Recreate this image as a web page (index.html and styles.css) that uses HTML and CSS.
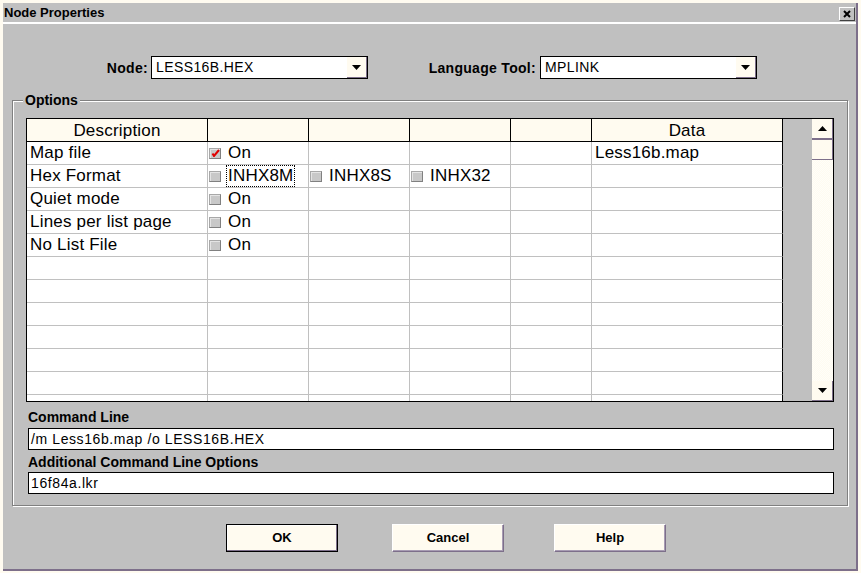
FILE: index.html
```html
<!DOCTYPE html>
<html>
<head>
<meta charset="utf-8">
<link rel="stylesheet" href="styles.css">
</head>
<body>
<div class="dialog">
  <div class="titlebar">
    <span class="title">Node Properties</span>
    <span class="close"><svg width="8" height="8" viewBox="0 0 8 8"><path d="M1 1 L7 7 M7 1 L1 7" stroke="#000" stroke-width="2"/></svg></span>
  </div>
  <div class="content">
    <div class="top-row">
      <span class="lbl node-lbl">Node:</span>
      <div class="combo"><span class="combo-text">LESS16B.HEX</span><span class="drop"><svg width="9" height="5" viewBox="0 0 9 5"><path d="M0 0 H9 L4.5 5 Z" fill="#000"/></svg></span></div>
      <span class="lbl lang-lbl">Language Tool:</span>
      <div class="combo"><span class="combo-text">MPLINK</span><span class="drop"><svg width="9" height="5" viewBox="0 0 9 5"><path d="M0 0 H9 L4.5 5 Z" fill="#000"/></svg></span></div>
    </div>

    <div class="groupbox">
      <span class="legend">Options</span>
      <div class="gridbox">
        <div class="table">
          <div class="hd">Description</div><div class="hd"></div><div class="hd"></div><div class="hd"></div><div class="hd"></div><div class="hd last">Data</div>

          <div class="c">Map file</div>
          <div class="c"><span class="cb"><svg width="9" height="8" viewBox="0 0 9 8"><path d="M1.5 4.5 L3 7 L8 1" stroke="#e00000" stroke-width="2" fill="none"/></svg></span><span class="opt">On</span></div>
          <div class="c"></div><div class="c"></div><div class="c"></div>
          <div class="c last data">Less16b.map</div>

          <div class="c">Hex Format</div>
          <div class="c"><span class="cb"></span><span class="opt focus">INHX8M</span></div>
          <div class="c"><span class="cb"></span><span class="opt">INHX8S</span></div>
          <div class="c"><span class="cb"></span><span class="opt">INHX32</span></div>
          <div class="c"></div><div class="c last"></div>

          <div class="c">Quiet mode</div>
          <div class="c"><span class="cb"></span><span class="opt">On</span></div>
          <div class="c"></div><div class="c"></div><div class="c"></div><div class="c last"></div>

          <div class="c">Lines per list page</div>
          <div class="c"><span class="cb"></span><span class="opt">On</span></div>
          <div class="c"></div><div class="c"></div><div class="c"></div><div class="c last"></div>

          <div class="c">No List File</div>
          <div class="c"><span class="cb"></span><span class="opt">On</span></div>
          <div class="c"></div><div class="c"></div><div class="c"></div><div class="c last"></div>

          <div class="c"></div><div class="c"></div><div class="c"></div><div class="c"></div><div class="c"></div><div class="c last"></div>
          <div class="c"></div><div class="c"></div><div class="c"></div><div class="c"></div><div class="c"></div><div class="c last"></div>
          <div class="c"></div><div class="c"></div><div class="c"></div><div class="c"></div><div class="c"></div><div class="c last"></div>
          <div class="c"></div><div class="c"></div><div class="c"></div><div class="c"></div><div class="c"></div><div class="c last"></div>
          <div class="c"></div><div class="c"></div><div class="c"></div><div class="c"></div><div class="c"></div><div class="c last"></div>
          <div class="c"></div><div class="c"></div><div class="c"></div><div class="c"></div><div class="c"></div><div class="c last"></div>
          <div class="c"></div><div class="c"></div><div class="c"></div><div class="c"></div><div class="c"></div><div class="c last"></div>
        </div>
        <div class="gap"></div>
        <div class="scrollbar">
          <div class="sb-btn"><svg width="9" height="5" viewBox="0 0 9 5"><path d="M0 5 H9 L4.5 0 Z" fill="#000"/></svg></div>
          <div class="sb-thumb"></div>
          <div class="sb-track"></div>
          <div class="sb-btn"><svg width="9" height="5" viewBox="0 0 9 5"><path d="M0 0 H9 L4.5 5 Z" fill="#000"/></svg></div>
        </div>
      </div>
      <div class="field-lbl first">Command Line</div>
      <div class="textbox">/m Less16b.map /o LESS16B.HEX</div>
      <div class="field-lbl">Additional Command Line Options</div>
      <div class="textbox second">16f84a.lkr</div>
    </div>

    <div class="buttons">
      <div class="btn default"><span>OK</span></div>
      <div class="btn cancel"><span>Cancel</span></div>
      <div class="btn help"><span>Help</span></div>
    </div>
  </div>
</div>
</body>
</html>
```
FILE: styles.css
```css
html, body {
  margin: 0;
  padding: 0;
}
body {
  background: #fffbf0;
  padding: 3px 0 0 3px;
  font-family: "Liberation Sans", Arial, sans-serif;
  color: #000;
}
.dialog {
  width: 855px;
  height: 568px;
  box-sizing: border-box;
  background: #c0c0c0;
  border-right: 2px solid #7d6f8a;
  border-bottom: 2px solid #7d6f8a;
  display: flex;
  flex-direction: column;
}
.titlebar {
  height: 21px;
  box-sizing: border-box;
  border-bottom: 2px solid #fff;
  display: flex;
  align-items: flex-start;
  justify-content: space-between;
  padding-left: 1px;
}
.title {
  font-weight: bold;
  font-size: 13px;
  line-height: 20px;
}
.close {
  width: 16px;
  height: 14px;
  box-sizing: border-box;
  margin-top: 4px;
  margin-right: 1px;
  border: 1px solid;
  border-color: #fff #404040 #404040 #fff;
  background: #c0c0c0;
  display: flex;
  align-items: center;
  justify-content: center;
}
.close svg { display: block; }
.content {
  flex: 1;
  display: flex;
  flex-direction: column;
}
.top-row {
  margin-top: 32px;
  display: flex;
  align-items: center;
  height: 23px;
}
.lbl {
  font-weight: bold;
  font-size: 14px;
  letter-spacing: 0.3px;
  text-align: right;
  box-sizing: border-box;
}
.node-lbl {
  width: 145px;
  padding-right: 0;
}
.lang-lbl {
  width: 172px;
  padding-right: 4px;
}
.combo {
  margin-left: 3px;
  width: 217px;
  height: 23px;
  box-sizing: border-box;
  border: 1px solid #000;
  background: #fff;
  display: flex;
  align-items: stretch;
}
.lang-lbl + .combo { margin-left: 0; }
.combo-text {
  flex: 1;
  font-size: 14px;
  letter-spacing: 0.4px;
  line-height: 21px;
  padding-left: 4px;
}
.drop {
  width: 20px;
  box-sizing: border-box;
  background: #fffbf0;
  border-right: 1px solid #7d6f8a;
  border-bottom: 1px solid #7d6f8a;
  display: flex;
  align-items: center;
  justify-content: center;
  padding-top: 1px;
}
.drop svg { display: block; }

.groupbox {
  position: relative;
  margin-top: 21px;
  margin-left: 9px;
  width: 836px;
  height: 406px;
  box-sizing: border-box;
  border: 1px solid #808080;
  box-shadow: inset 1px 1px 0 #fff, 1px 1px 0 #fff;
  padding: 17px 0 0 13px;
}
.legend {
  position: absolute;
  top: -9px;
  left: 10px;
  padding: 0 2px;
  background: #c0c0c0;
  font-weight: bold;
  font-size: 14px;
  line-height: 16px;
}
.gridbox {
  width: 808px;
  height: 284px;
  box-sizing: border-box;
  border: 1px solid #000;
  display: flex;
  background: #c0c0c0;
}
.table {
  width: 756px;
  height: 282px;
  overflow: hidden;
  display: grid;
  grid-template-columns: 181px 101px 101px 101px 81px 191px;
  grid-auto-rows: 23px;
  background: #fff;
  font-size: 17px;
  letter-spacing: 0.2px;
}
.hd {
  background: #fffbf0;
  border-right: 1px solid #000;
  border-bottom: 1px solid #000;
  text-align: center;
  line-height: 23px;
}
.c {
  border-right: 1px solid #c0c0c0;
  border-bottom: 1px solid #c0c0c0;
  line-height: 22px;
  padding-left: 3px;
  display: flex;
  align-items: center;
  white-space: nowrap;
}
.c.last { border-right-color: #000; }
.c:has(.cb) { padding-left: 0; }
.cb {
  width: 12px;
  height: 11px;
  box-sizing: border-box;
  background: #c8c8c8;
  border: 1px solid;
  border-color: #a8a8a8 #808080 #808080 #a8a8a8;
  box-shadow: inset 1px 1px 0 #e4e4e4;
  margin-left: 1px;
  margin-right: 7px;
  display: flex;
  align-items: center;
  justify-content: center;
  flex: none;
}
.cb svg { display: block; }
.opt {
  line-height: 20px;
  padding: 0 1px;
  border: 1px solid transparent;
  margin-left: -2px;
}
.opt.focus {
  border: 1px dotted #000;
}
.gap {
  width: 29px;
}
.scrollbar {
  width: 21px;
  display: flex;
  flex-direction: column;
}
.sb-btn {
  height: 20px;
  box-sizing: border-box;
  background: #fffbf0;
  border-right: 1px solid #7d6f8a;
  border-bottom: 1px solid #7d6f8a;
  display: flex;
  align-items: center;
  justify-content: center;
}
.sb-btn svg { display: block; }
.sb-thumb {
  height: 21px;
  box-sizing: border-box;
  background: #fffbf0;
  border-top: 1px solid #7d6f8a;
  border-right: 1px solid #7d6f8a;
  border-bottom: 1px solid #7d6f8a;
}
.sb-track {
  flex: 1;
  background: repeating-conic-gradient(#fffbf0 0 25%, #fffef9 0 50%) 0 0 / 2px 2px;
}
.field-lbl {
  margin-left: 2px;
  margin-top: 7px;
  font-weight: bold;
  font-size: 14px;
  line-height: 16px;
}
.field-lbl + .textbox { margin-top: 3px; }
.textbox + .field-lbl { margin-top: 4px; }
.textbox.second { margin-top: 2px; }
.textbox {
  margin-left: 2px;
  width: 806px;
  height: 22px;
  box-sizing: border-box;
  border: 1px solid #000;
  background: #fff;
  font-size: 14px;
  letter-spacing: 0.6px;
  line-height: 20px;
  padding-left: 2px;
}
.buttons {
  margin-top: 18px;
  display: flex;
  padding-left: 223px;
}
.btn {
  width: 112px;
  height: 28px;
  box-sizing: border-box;
  background: #fffbf0;
  border: 1px solid;
  border-color: #fff #7d6f8a #7d6f8a #fff;
  box-shadow: inset -1px -1px 0 #a89cb3;
  display: flex;
  align-items: center;
  justify-content: center;
  font-weight: bold;
  font-size: 13px;
  padding-bottom: 2px;
}
.btn.default {
  border: 1px solid #000;
  box-shadow: inset -1px -1px 0 #7d6f8a, inset 1px 1px 0 #fff;
}
.btn.cancel { margin-left: 54px; }
.btn.help { margin-left: 50px; }
```
